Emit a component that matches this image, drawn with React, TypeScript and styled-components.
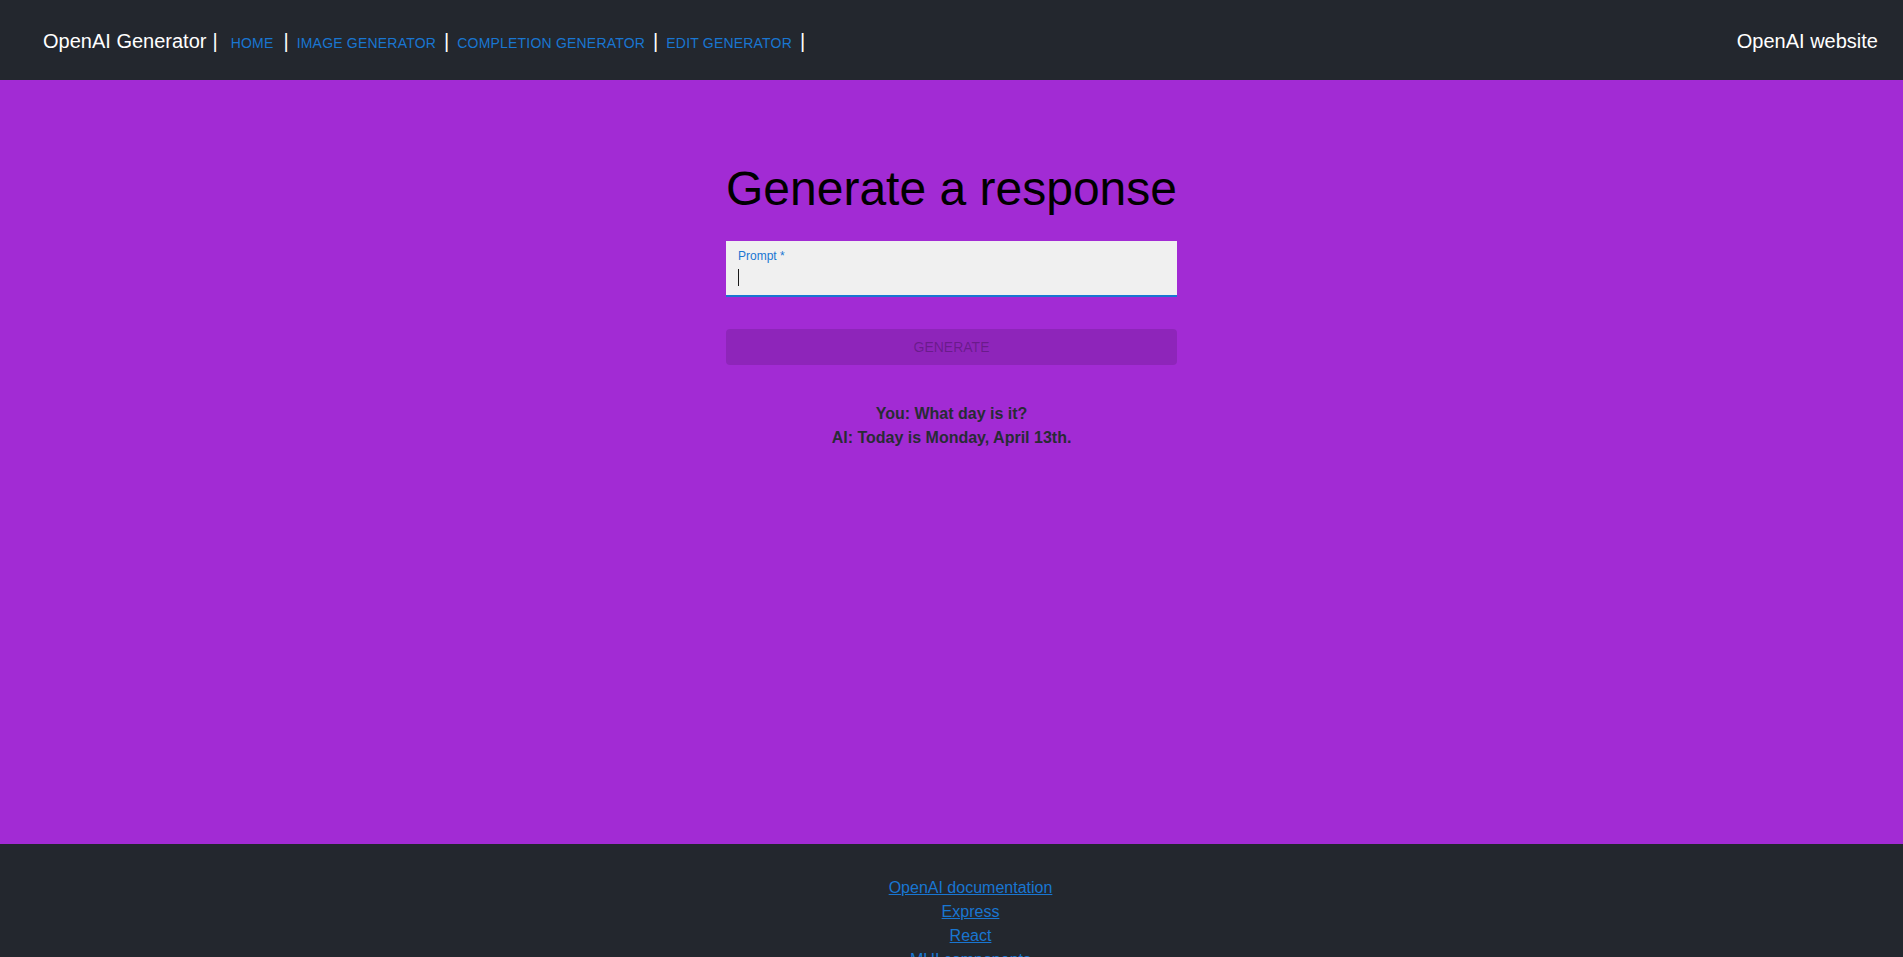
import React from "react";
import styled, { createGlobalStyle } from "styled-components";

const GlobalStyle = createGlobalStyle`
  html { scrollbar-width: none; }
  html::-webkit-scrollbar { display: none; }
  body {
    margin: 0;
    font-family: "Liberation Sans", Arial, Helvetica, sans-serif;
    background: #23272e;
  }
`;

const Header = styled.header`
  height: 80px;
  background: #23272e;
  display: flex;
  align-items: center;
  justify-content: space-between;
  padding: 0 25px 0 43px;
  box-sizing: border-box;
`;

const Nav = styled.nav`
  display: flex;
  align-items: baseline;
  padding-top: 2px;
`;

const Brand = styled.span`
  font-size: 20px;
  color: #ffffff;
  white-space: pre;
`;

const Sep = styled.span<{ $space?: number }>`
  font-size: 20px;
  color: #ffffff;
  margin-left: ${(p) => p.$space ?? 0}px;
`;

const NavLink = styled.a<{ $space?: number }>`
  font-size: 14px;
  letter-spacing: 0.2px;
  color: #1976d2;
  text-decoration: none;
  text-transform: uppercase;
  padding: 0 8px;
  margin-left: ${(p) => p.$space ?? 0}px;
  cursor: pointer;
`;

const SiteLink = styled.a`
  font-size: 20px;
  color: #ffffff;
  text-decoration: none;
  padding-top: 2px;
`;

const Main = styled.main`
  height: 764px;
  background: #a22bd4;
  padding-top: 81px;
  box-sizing: border-box;
`;

const Column = styled.div`
  width: 451px;
  margin: 0 auto;
  display: flex;
  flex-direction: column;
`;

const Title = styled.h1`
  margin: 0;
  font-size: 48px;
  font-weight: 400;
  line-height: normal;
  color: #000000;
  text-align: center;
  white-space: nowrap;
`;

const Field = styled.div`
  margin-top: 25px;
  background: #f0f0f0;
  border-bottom: 2px solid #1976d2;
  padding: 7px 12px 9px;
  display: flex;
  flex-direction: column;
`;

const FieldLabel = styled.label`
  font-size: 12px;
  line-height: 17px;
  color: #1976d2;
`;

const InputRow = styled.div`
  margin-top: 4px;
  height: 17px;
  display: flex;
  align-items: stretch;
`;

const Caret = styled.span`
  width: 1px;
  background: #1a1a1a;
`;

const GenerateButton = styled.button`
  margin-top: 32px;
  height: 36px;
  border: none;
  border-radius: 4px;
  background: rgba(0, 0, 0, 0.12);
  color: rgba(0, 0, 0, 0.26);
  font-family: "Liberation Sans", Arial, sans-serif;
  font-size: 14px;
  text-transform: uppercase;
  cursor: default;
`;

const Conversation = styled.div`
  margin-top: 37px;
`;

const Line = styled.p`
  margin: 0;
  font-size: 16px;
  line-height: 24px;
  font-weight: 700;
  color: #282c34;
  text-align: center;
  white-space: nowrap;
`;

const Footer = styled.footer`
  background: #23272e;
  padding: 32px 0 40px 38px;
  display: flex;
  flex-direction: column;
  align-items: center;
`;

const FooterLink = styled.a`
  font-size: 16px;
  line-height: 24px;
  color: #1976d2;
  text-decoration: underline;
`;

const navItems = ["Home", "Image generator", "Completion generator", "Edit generator"];
const footerLinks = ["OpenAI documentation", "Express", "React", "MUI components"];

export default function App() {
  return (
    <>
      <GlobalStyle />
      <Header>
        <Nav>
          <Brand>OpenAI Generator</Brand>
          <Sep $space={6}>|</Sep>
          {navItems.map((item, i) => (
            <React.Fragment key={item}>
              <NavLink $space={i === 0 ? 5 : 0}>{item}</NavLink>
              <Sep $space={i === 0 ? 2 : 0}>|</Sep>
            </React.Fragment>
          ))}
        </Nav>
        <SiteLink>OpenAI website</SiteLink>
      </Header>
      <Main>
        <Column>
          <Title>Generate a response</Title>
          <Field>
            <FieldLabel>Prompt *</FieldLabel>
            <InputRow>
              <Caret />
            </InputRow>
          </Field>
          <GenerateButton disabled>Generate</GenerateButton>
          <Conversation>
            <Line>You: What day is it?</Line>
            <Line>AI: Today is Monday, April 13th.</Line>
          </Conversation>
        </Column>
      </Main>
      <Footer>
        {footerLinks.map((l) => (
          <FooterLink key={l}>{l}</FooterLink>
        ))}
      </Footer>
    </>
  );
}
